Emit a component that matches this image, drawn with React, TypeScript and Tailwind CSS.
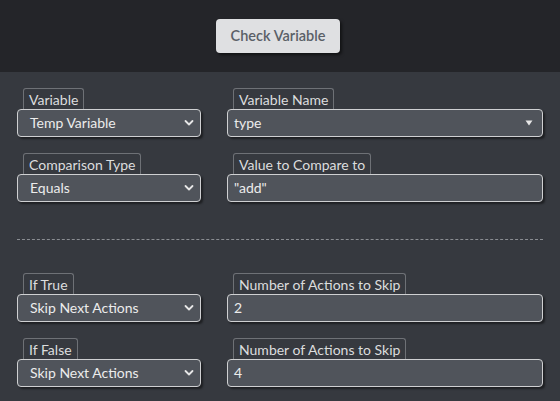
import React from "react";

const Chevron = () => (
  <svg width="10" height="7" viewBox="0 0 10 7" className="absolute right-[6px] top-1/2 -translate-y-1/2">
    <path d="M1.5 1.5 L5 5 L8.5 1.5" fill="none" stroke="#e6e6e6" strokeWidth="1.8" strokeLinecap="round" strokeLinejoin="round" />
  </svg>
);

const Triangle = () => (
  <svg width="8" height="6" viewBox="0 0 8 6" className="absolute right-[9px] top-1/2 -translate-y-1/2">
    <path d="M0.5 0.5 L7.5 0.5 L4 5.5 Z" fill="#e6e6e6" />
  </svg>
);

function Label({ text }: { text: string }) {
  return (
    <div className="ml-[6px] self-start h-[21px] px-[5px] pt-[1px] border border-b-0 border-[#6e7176] rounded-t-[3px] text-[14px] leading-[19px] text-[#dcddde]">
      {text}
    </div>
  );
}

function Field({
  label,
  value,
  kind,
}: {
  label: string;
  value: string;
  kind: "select" | "combo" | "input";
}) {
  return (
    <div className="flex flex-col">
      <Label text={label} />
      <div
        className={
          "relative h-[28px] rounded-[4px] border border-[#cfd0d2] bg-[#50545b] text-[14px] leading-[26px] text-[#ececec] shadow-[2px_2px_2px_rgba(0,0,0,0.45)] " +
          (kind === "select" ? "pl-[12px]" : "pl-[6px]")
        }
      >
        {value}
        {kind === "select" && <Chevron />}
        {kind === "combo" && <Triangle />}
      </div>
    </div>
  );
}

export default function App() {
  return (
    <div
      className="w-[560px] h-[401px] overflow-hidden bg-[#36393f] flex flex-col"
      style={{ fontFamily: "Lato, 'Noto Sans', sans-serif" }}
    >
      <div className="h-[72px] bg-[#242529] flex justify-center pt-[19px] pr-[4px]">
        <div className="w-[124px] h-[34px] rounded-[4px] bg-[#dfe0e2] text-[#5a5f67] text-[14.5px] font-semibold flex items-center justify-center shadow-[2px_2px_3px_rgba(0,0,0,0.5)]">
          Check Variable
        </div>
      </div>
      <div className="px-[17px] pt-[16px]">
        <div className="grid grid-cols-[184px_316px] gap-x-[26px] gap-y-[16px]">
          <Field label="Variable" value="Temp Variable" kind="select" />
          <Field label="Variable Name" value="type" kind="combo" />
          <Field label="Comparison Type" value="Equals" kind="select" />
          <Field label="Value to Compare to" value={'"add"'} kind="input" />
        </div>
        <div className="mt-[37px] mb-[33px] w-[526px] border-t border-dashed border-[#8a8d92]" />
        <div className="grid grid-cols-[184px_316px] gap-x-[26px] gap-y-[16px]">
          <Field label="If True" value="Skip Next Actions" kind="select" />
          <Field label="Number of Actions to Skip" value="2" kind="input" />
          <Field label="If False" value="Skip Next Actions" kind="select" />
          <Field label="Number of Actions to Skip" value="4" kind="input" />
        </div>
      </div>
    </div>
  );
}
